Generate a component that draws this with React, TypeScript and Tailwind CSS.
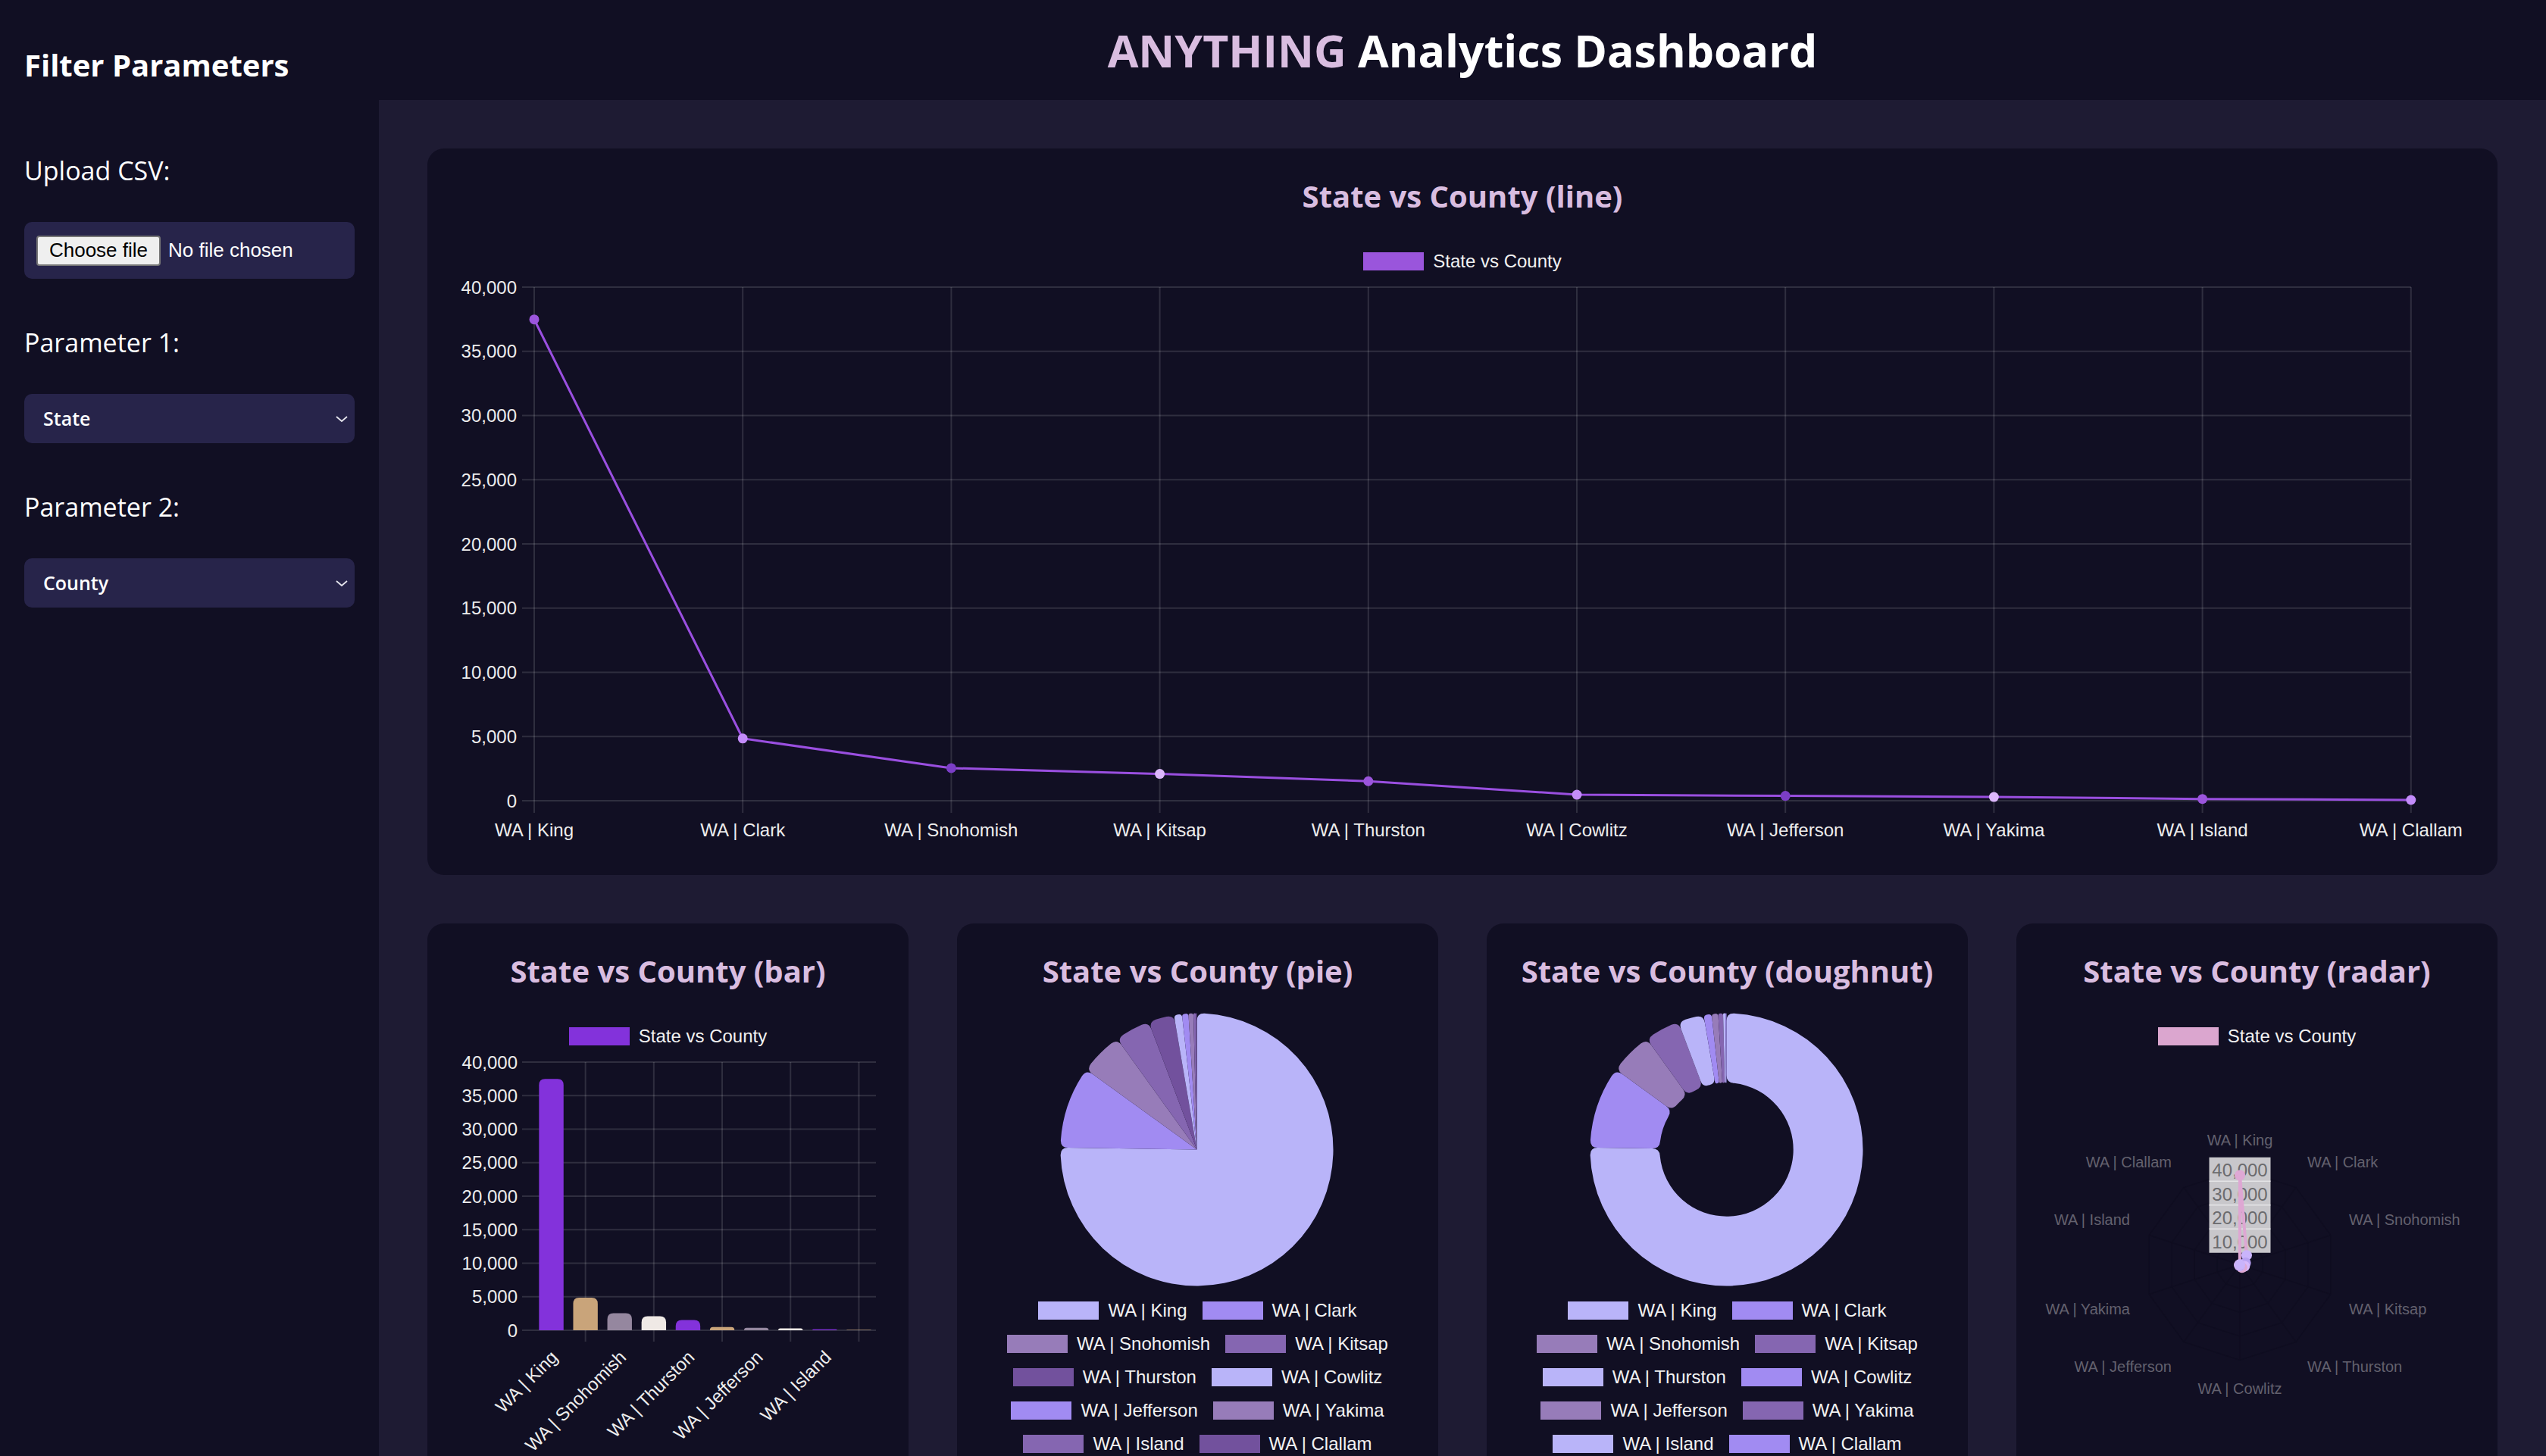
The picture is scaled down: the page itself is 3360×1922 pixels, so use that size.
import React from "react";

const COUNTIES = ["King", "Clark", "Snohomish", "Kitsap", "Thurston", "Cowlitz", "Jefferson", "Yakima", "Island", "Clallam"];
const VALUES = [37480, 4850, 2540, 2090, 1520, 470, 380, 290, 140, 60];
const LABELS = COUNTIES.map((c) => `WA | ${c}`);

const fmt = (n: number) => n.toLocaleString("en-US");
const TICKS = [0, 5000, 10000, 15000, 20000, 25000, 30000, 35000, 40000];
const GRID = "rgba(255,255,255,0.13)";

type LegendItem = { label: string; color: string };

function LegendRow({ items }: { items: LegendItem[] }) {
    return (
        <div className="flex items-center justify-center gap-5">
            {items.map((it) => (
                <div key={it.label} className="flex items-center gap-3">
                    <span className="block h-6 w-20" style={{ backgroundColor: it.color }} />
                    <span className="text-[24px] leading-[26px] text-[#f2f2f2]">{it.label}</span>
                </div>
            ))}
        </div>
    );
}

function Card({ title, children }: { title: string; children: React.ReactNode }) {
    return (
        <section className="rounded-[22px] bg-[#110f23] pt-10 pb-16">
            <h3 className="text-center text-[40px] font-bold leading-[46px] text-[#d9bde0]">{title}</h3>
            {children}
        </section>
    );
}

function LineChart() {
    const x = (i: number) => 141 + i * 275.2;
    const y = (v: number) => 697 - (v / 40000) * 678;
    const pointColors = ["#9b55dc", "#c38cfa", "#7b3ec6", "#dcb7fb"];
    return (
        <svg width={2732} height={795} className="mt-[2px] block font-['Liberation_Sans',Arial,sans-serif]">
            {TICKS.map((t) => (
                <g key={t}>
                    <line x1={125} x2={x(9)} y1={y(t)} y2={y(t)} stroke={GRID} strokeWidth={2} />
                    <text x={118} y={y(t)} textAnchor="end" dominantBaseline="central" fontSize={24} fill="#ededed">
                        {fmt(t)}
                    </text>
                </g>
            ))}
            {LABELS.map((l, i) => (
                <g key={l}>
                    <line x1={x(i)} x2={x(i)} y1={y(40000)} y2={713} stroke={GRID} strokeWidth={2} />
                    <text x={x(i)} y={735} textAnchor="middle" dominantBaseline="central" fontSize={24} fill="#ededed">
                        {l}
                    </text>
                </g>
            ))}
            <polyline
                points={VALUES.map((v, i) => `${x(i)},${y(v)}`).join(" ")}
                fill="none"
                stroke="#9a4fe0"
                strokeWidth={3}
                strokeLinejoin="round"
            />
            {VALUES.map((v, i) => (
                <circle key={i} cx={x(i)} cy={y(v)} r={6.5} fill={pointColors[i % 4]} />
            ))}
        </svg>
    );
}

function BarChart() {
    const x0 = 141;
    const cw = 45.1;
    const y0 = 373;
    const y = (v: number) => y0 - (v / 40000) * 354;
    const colors = ["#8332db", "#c9a47a", "#95879f", "#efe9e5"];
    const bw = 32.4;
    return (
        <svg width={635} height={560} className="mt-[2px] block font-['Liberation_Sans',Arial,sans-serif]">
            {TICKS.map((t) => (
                <g key={t}>
                    <line x1={125} x2={x0 + cw * 10} y1={y(t)} y2={y(t)} stroke={GRID} strokeWidth={2} />
                    <text x={119} y={y(t)} textAnchor="end" dominantBaseline="central" fontSize={24} fill="#ededed">
                        {fmt(t)}
                    </text>
                </g>
            ))}
            {[1, 3, 5, 7, 9].map((i) => (
                <line key={i} x1={x0 + cw * (i + 0.5)} x2={x0 + cw * (i + 0.5)} y1={y(40000)} y2={388} stroke={GRID} strokeWidth={2} />
            ))}
            {VALUES.map((v, i) => {
                const left = x0 + cw * (i + 0.5) - bw / 2;
                const top = y(v);
                const h = y0 - top;
                const r = Math.min(8, h, bw / 2);
                const d = `M${left},${y0} L${left},${top + r} Q${left},${top} ${left + r},${top} L${left + bw - r},${top} Q${left + bw},${top} ${left + bw},${top + r} L${left + bw},${y0} Z`;
                return <path key={i} d={d} fill={colors[i % 4]} />;
            })}
            {[0, 2, 4, 6, 8].map((i) => {
                const tx = x0 + cw * (i + 0.5) + 4;
                const ty = 404;
                return (
                    <text
                        key={i}
                        x={tx}
                        y={ty}
                        transform={`rotate(-45 ${tx} ${ty})`}
                        textAnchor="end"
                        dominantBaseline="central"
                        fontSize={24}
                        fill="#ededed"
                    >
                        {LABELS[i]}
                    </text>
                );
            })}
        </svg>
    );
}

function sectorPath(cx: number, cy: number, r0: number, r1: number, a0: number, a1: number, cr: number) {
    const pt = (r: number, a: number) => `${cx + r * Math.cos(a)},${cy + r * Math.sin(a)}`;
    const span = a1 - a0;
    const c1 = Math.min(cr, (span * r1) / 2.2, (r1 - r0) / 2);
    const da1 = c1 / r1;
    const large1 = span - 2 * da1 > Math.PI ? 1 : 0;
    let d = `M${pt(r1 - c1, a0)} Q${pt(r1, a0)} ${pt(r1, a0 + da1)} A${r1},${r1} 0 ${large1} 1 ${pt(r1, a1 - da1)} Q${pt(r1, a1)} ${pt(r1 - c1, a1)}`;
    if (r0 <= 0) {
        d += ` L${cx},${cy} Z`;
    } else {
        const c0 = Math.min(cr, (span * r0) / 2.2, (r1 - r0) / 2);
        const da0 = c0 / r0;
        const large0 = span - 2 * da0 > Math.PI ? 1 : 0;
        d += ` L${pt(r0 + c0, a1)} Q${pt(r0, a1)} ${pt(r0, a1 - da0)} A${r0},${r0} 0 ${large0} 0 ${pt(r0, a0 + da0)} Q${pt(r0, a0)} ${pt(r0 + c0, a0)} Z`;
    }
    return d;
}

function PieChart({ colors, cutout }: { colors: string[]; cutout: number }) {
    const cx = 316.5;
    const cy = 212.5;
    const R = 180;
    const total = VALUES.reduce((s, v) => s + v, 0);
    let a = -Math.PI / 2;
    const slices = VALUES.map((v, i) => {
        const a0 = a;
        const a1 = a + (v / total) * Math.PI * 2;
        a = a1;
        return <path key={i} d={sectorPath(cx, cy, R * cutout, R, a0, a1, 10)} fill={colors[i % colors.length]} />;
    });
    const items = LABELS.map((l, i) => ({ label: l, color: colors[i % colors.length] }));
    return (
        <>
            <svg width={635} height={412} className="block">
                {slices}
            </svg>
            <div className="flex flex-col items-center gap-[18px] font-['Liberation_Sans',Arial,sans-serif]">
                {[0, 2, 4, 6, 8].map((i) => (
                    <LegendRow key={i} items={items.slice(i, i + 2)} />
                ))}
            </div>
        </>
    );
}

function RadarChart() {
    const cx = 295;
    const cy = 286.5;
    const R = 126;
    const ang = (i: number) => ((-90 + i * 36) * Math.PI) / 180;
    const p = (r: number, i: number) => [cx + r * Math.cos(ang(i)), cy + r * Math.sin(ang(i))];
    const poly = (r: number) => COUNTIES.map((_, i) => p(r, i).join(",")).join(" ");
    const labelPos: [number, number, "start" | "middle" | "end"][] = [
        [295, 122, "middle"],
        [384, 151, "start"],
        [439, 227, "start"],
        [439, 345, "start"],
        [384, 421, "start"],
        [295, 450, "middle"],
        [205, 421, "end"],
        [150, 345, "end"],
        [150, 227, "end"],
        [205, 151, "end"],
    ];
    const pointColors = ["#dea8d4", "#c9b4fb", "#b7a1f2", "#d6b9fc"];
    const pts = VALUES.map((v, i) => p((v / 40000) * R, i));
    return (
        <svg width={635} height={560} className="mt-[2px] block font-['Liberation_Sans',Arial,sans-serif]">
            {[1, 2, 3, 4].map((k) => (
                <polygon key={k} points={poly((R * k) / 4)} fill="none" stroke="#0f0d20" strokeWidth={1.5} />
            ))}
            {COUNTIES.map((_, i) => {
                const [ex, ey] = p(R, i);
                return <line key={i} x1={cx} y1={cy} x2={ex} y2={ey} stroke="#0f0d20" strokeWidth={1.5} />;
            })}
            {[40000, 30000, 20000, 10000].map((t, k) => {
                const ty = cy - (t / 40000) * R;
                return (
                    <g key={t}>
                        <rect x={cx - 40.5} y={ty - 15.75} width={81} height={31.5} fill="#c8c7cb" />
                        {k > 0 && <line x1={cx - 40.5} x2={cx + 40.5} y1={ty - 15.75} y2={ty - 15.75} stroke="#e4e4e6" strokeWidth={1.5} />}
                        <text x={cx} y={ty + 1} textAnchor="middle" dominantBaseline="central" fontSize={24} fill="#6b6b6e">
                            {fmt(t)}
                        </text>
                    </g>
                );
            })}
            {LABELS.map((l, i) => (
                <text key={l} x={labelPos[i][0]} y={labelPos[i][1]} textAnchor={labelPos[i][2]} dominantBaseline="central" fontSize={20} fill="#63616e">
                    {l}
                </text>
            ))}
            <polygon points={pts.map((q) => q.join(",")).join(" ")} fill="none" stroke="#dea7d3" strokeWidth={4} strokeLinejoin="round" />
            {pts.map((q, i) => (
                <circle key={i} cx={q[0]} cy={q[1]} r={7} fill={pointColors[i % 4]} />
            ))}
        </svg>
    );
}

function Field({ label, children, last }: { label: string; children: React.ReactNode; last?: boolean }) {
    return (
        <div className={last ? "" : "mb-15"}>
            <label className="mb-11 block text-[34px] leading-[48px] text-white">{label}</label>
            {children}
        </div>
    );
}

function Select({ value }: { value: string }) {
    return (
        <div className="relative">
            <select
                defaultValue={value}
                className="block h-[65px] w-full appearance-none rounded-[10px] bg-[#27244a] pl-[25px] text-[25px] font-semibold text-white outline-none"
            >
                <option>{value}</option>
            </select>
            <svg width="18" height="10" viewBox="0 0 18 10" className="pointer-events-none absolute right-[8px] top-1/2 -translate-y-1/2">
                <polyline points="2,2 9,8 16,2" fill="none" stroke="#e6e6ee" strokeWidth="1.8" />
            </svg>
        </div>
    );
}

export default function App() {
    const lineLegend = [{ label: "State vs County", color: "#9a55dc" }];
    const barLegend = [{ label: "State vs County", color: "#8332db" }];
    const radarLegend = [{ label: "State vs County", color: "#dba6cf" }];
    return (
        <div className="flex min-h-screen bg-[#110f23] font-['Open_Sans',Arial,sans-serif]">
            <aside className="w-[500px] shrink-0 px-8 pt-[62px]">
                <h2 className="text-[40px] font-bold leading-[48px] text-white">Filter Parameters</h2>
                <div className="mt-[91px]">
                    <Field label="Upload CSV:">
                        <div className="flex h-[75px] items-center rounded-[10px] bg-[#27244a] pl-4 font-['Liberation_Sans',Arial,sans-serif]">
                            <span className="flex h-10 w-[164px] items-center justify-center rounded-[4px] border-2 border-[#767676] bg-[#efefef] text-[26px] text-black">
                                Choose file
                            </span>
                            <span className="ml-[10px] text-[26px] text-white">No file chosen</span>
                        </div>
                    </Field>
                    <Field label="Parameter 1:">
                        <Select value="State" />
                    </Field>
                    <Field label="Parameter 2:" last>
                        <Select value="County" />
                    </Field>
                </div>
            </aside>

            <div className="flex min-w-0 flex-1 flex-col">
                <header className="flex h-[132px] shrink-0 items-center justify-center">
                    <h1 className="text-[59px] font-bold leading-none text-white">
                        <span className="text-[#d9bde0]">ANYTHING</span> Analytics Dashboard
                    </h1>
                </header>

                <main className="flex flex-1 flex-col gap-16 bg-[#1e1b33] p-16">
                    <section className="rounded-[22px] bg-[#110f23] pt-10">
                        <h3 className="text-center text-[40px] font-bold leading-[46px] text-[#d9bde0]">State vs County (line)</h3>
                        <div className="mt-[50px] font-['Liberation_Sans',Arial,sans-serif]">
                            <LegendRow items={lineLegend} />
                        </div>
                        <LineChart />
                    </section>

                    <div className="grid grid-cols-4 gap-16">
                        <Card title="State vs County (bar)">
                            <div className="mt-[50px] font-['Liberation_Sans',Arial,sans-serif]">
                                <LegendRow items={barLegend} />
                            </div>
                            <BarChart />
                        </Card>
                        <Card title="State vs County (pie)">
                            <PieChart colors={["#b9b4f9", "#a18bf2", "#977cb9", "#8566b1", "#72519d"]} cutout={0} />
                        </Card>
                        <Card title="State vs County (doughnut)">
                            <PieChart colors={["#b9b4f9", "#a18bf2", "#977cb9", "#8566b1"]} cutout={0.49} />
                        </Card>
                        <Card title="State vs County (radar)">
                            <div className="mt-[50px] font-['Liberation_Sans',Arial,sans-serif]">
                                <LegendRow items={radarLegend} />
                            </div>
                            <RadarChart />
                        </Card>
                    </div>
                </main>
            </div>
        </div>
    );
}
